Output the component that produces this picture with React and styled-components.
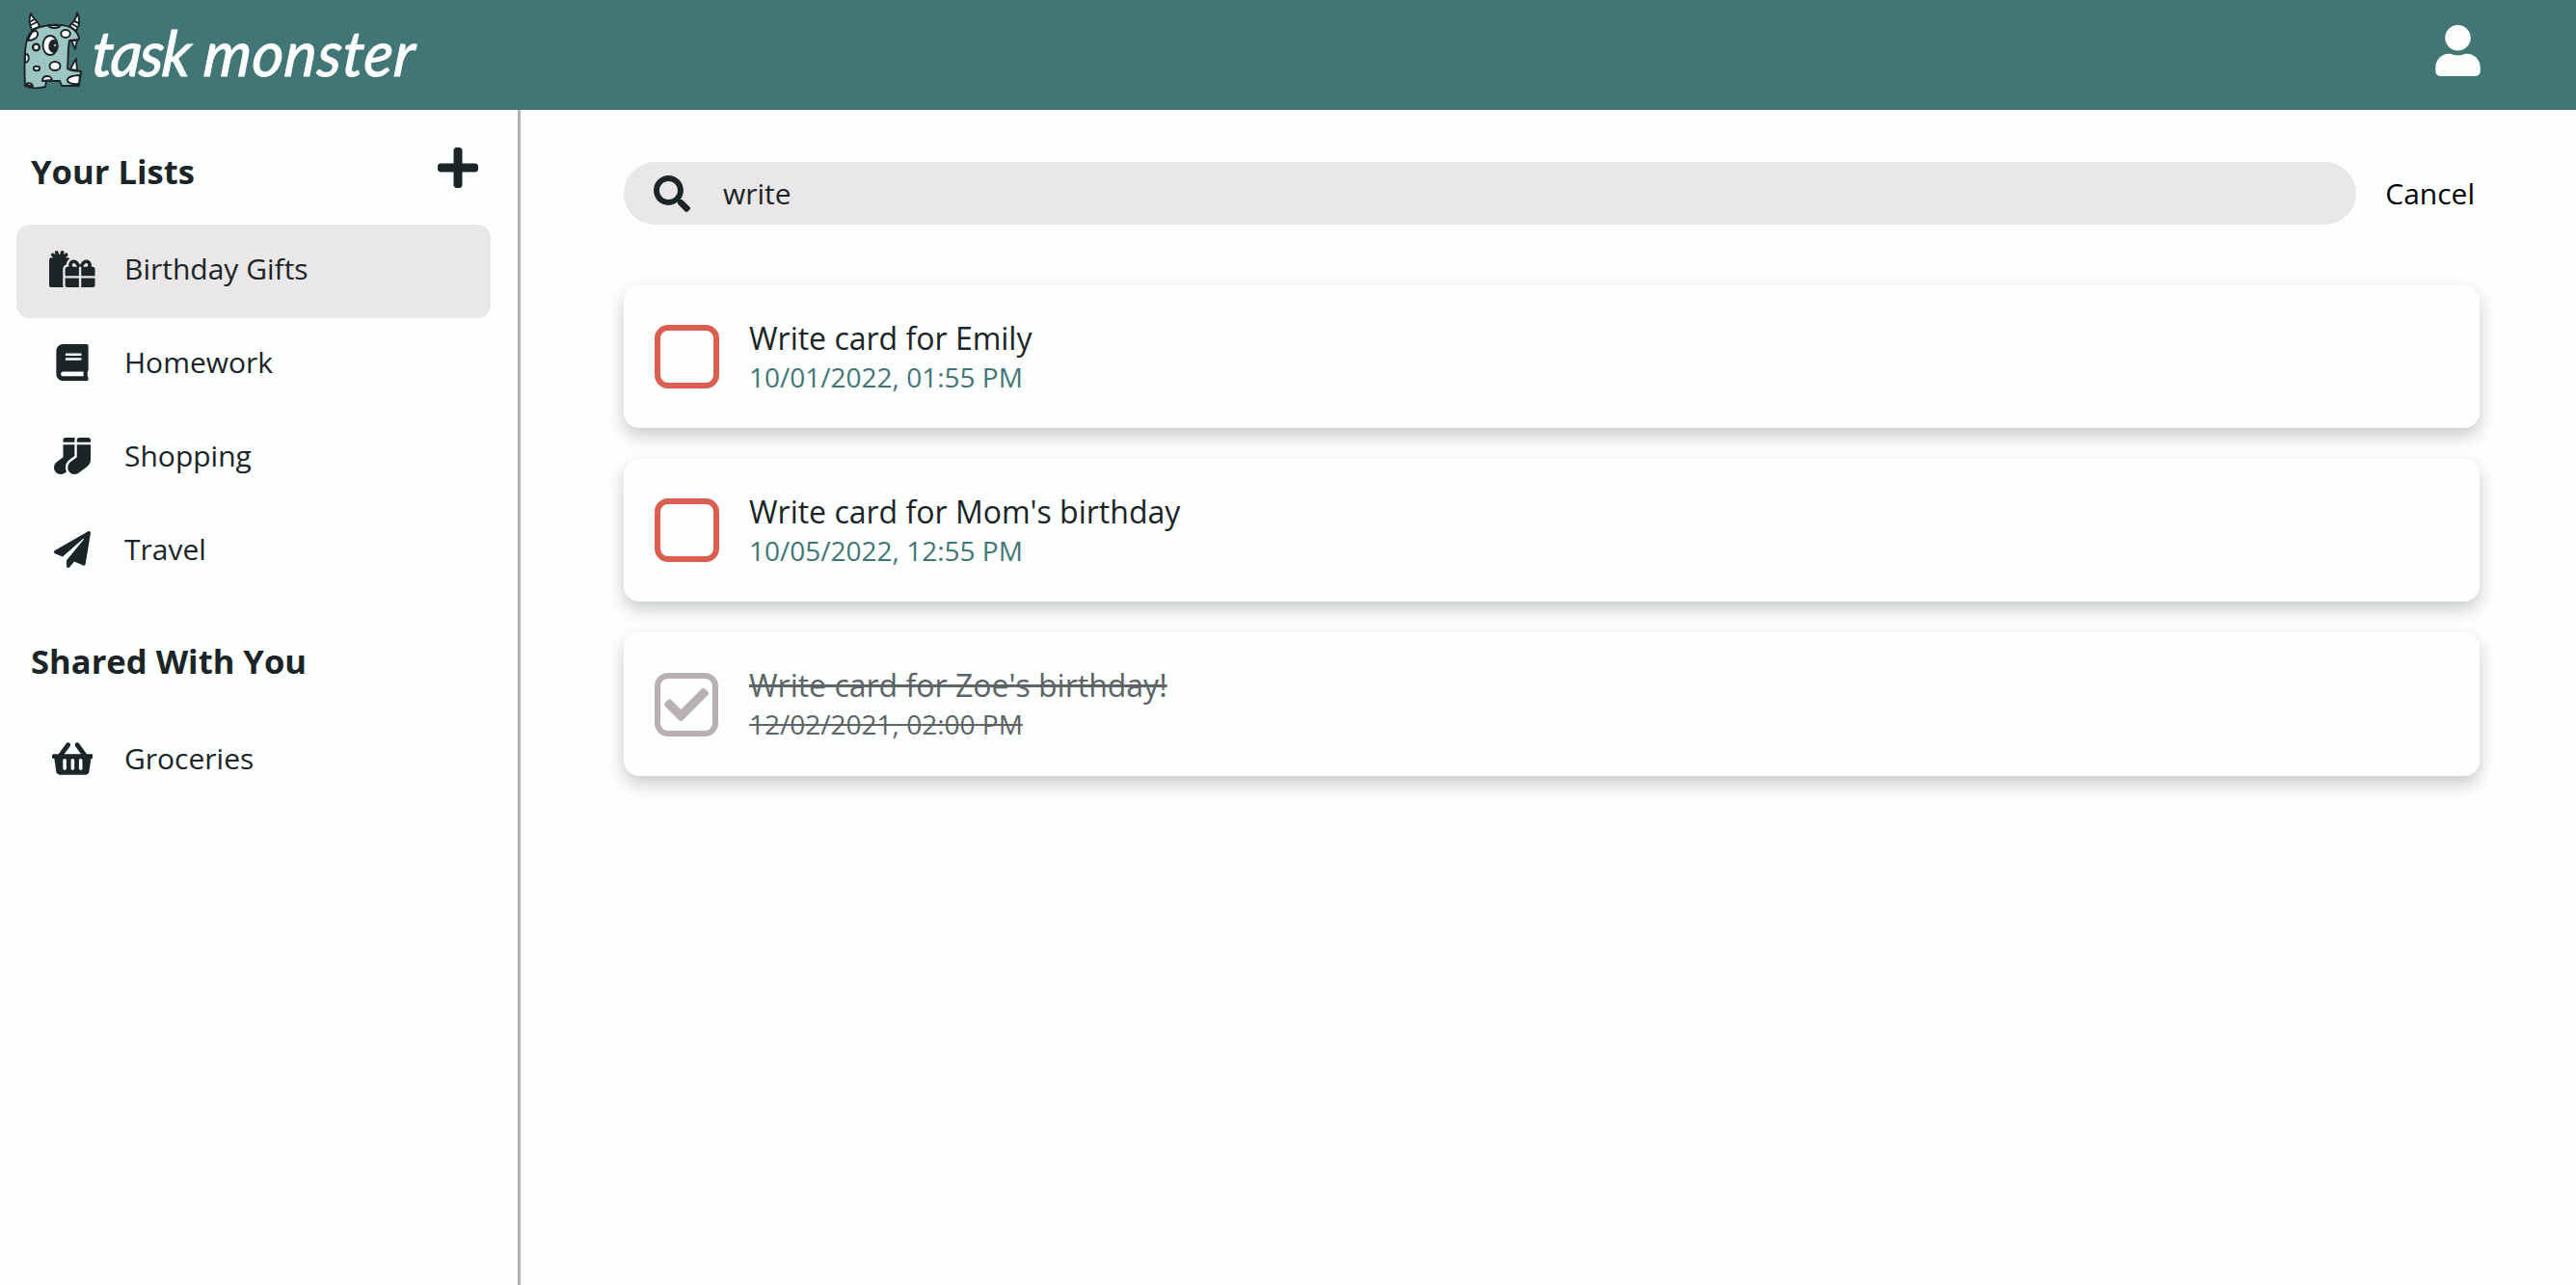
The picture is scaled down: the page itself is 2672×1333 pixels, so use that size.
import React from "react";
import styled, { createGlobalStyle } from "styled-components";
import { FaPlus, FaGifts, FaBook, FaSocks, FaPaperPlane, FaShoppingBasket, FaUser, FaSearch, FaCheck } from "react-icons/fa";

const GlobalStyle = createGlobalStyle`
  *, *::before, *::after { box-sizing: border-box; }
  body {
    margin: 0;
    background: #fdfefe;
    color: #1b2426;
    font-family: "Open Sans", "Noto Sans", sans-serif;
    overflow: hidden;
  }
  button, input { font: inherit; color: inherit; border: 0; background: none; padding: 0; }
`;

const Page = styled.div`
  display: flex;
  flex-direction: column;
  height: 100vh;
`;

const Header = styled.header`
  display: flex;
  align-items: center;
  justify-content: space-between;
  flex: none;
  height: 114px;
  padding: 0 96px 9px 24px;
  background: #427676;
  color: #fdfefe;
`;

const Brand = styled.div`
  display: flex;
  align-items: center;
`;

const MonsterSvg = styled.svg`
  width: 62px;
  height: 82px;
  display: block;
`;

const Wordmark = styled.span`
  margin: 2px 0 0 10px;
  font-family: Lato, sans-serif;
  font-style: italic;
  font-size: 65px;
  line-height: 80px;
  letter-spacing: 1px;
  white-space: nowrap;
  -webkit-text-stroke: 1.1px #fdfefe;
  transform: scaleX(0.963) skewX(-5deg);
  transform-origin: left center;
`;

const TightWord = styled.span`
  letter-spacing: -2px;
`;

const AccountButton = styled.button`
  display: flex;
  font-size: 53px;
`;

const Body = styled.div`
  display: flex;
  flex: 1;
  min-height: 0;
`;

const Sidebar = styled.aside`
  flex: none;
  width: 540px;
  border-right: 3px solid #b9b0b3;
  padding: 33px 28px 0 17px;
`;

const ListHeader = styled.div`
  display: flex;
  align-items: flex-start;
  justify-content: space-between;
  height: 86px;
  padding: 0 10px 0 15px;
`;

const ListTitle = styled.h2`
  margin: 7px 0 0;
  font-size: 34.6px;
  line-height: 48px;
  font-weight: 700;
`;

const AddButton = styled.button`
  display: flex;
  margin-top: 3px;
  font-size: 48px;
`;

const List = styled.nav`
  display: flex;
  flex-direction: column;
  margin-bottom: ${(p) => p.$gap || 0}px;
`;

const ListItem = styled.a`
  display: flex;
  align-items: center;
  height: 97px;
  padding: 0 0 6px 30px;
  border-radius: 14px;
  background: ${(p) => (p.$active ? "#eae7e8" : "transparent")};
  font-size: 30px;
`;

const ItemIcon = styled.span`
  display: flex;
  justify-content: center;
  width: 56px;
  margin-right: 26px;
  font-size: 38px;
  svg { width: ${(p) => p.$ratio}em; height: 1em; }
`;

const Main = styled.main`
  flex: 1;
  padding: 54px 100px 0 107px;
`;

const SearchRow = styled.div`
  display: flex;
  align-items: center;
  margin-bottom: 63px;
`;

const SearchField = styled.label`
  display: flex;
  align-items: center;
  flex: 1;
  height: 65px;
  padding-left: 31px;
  border-radius: 33px;
  background: #eae7e8;
  svg { font-size: 38px; }
`;

const SearchInput = styled.input`
  flex: 1;
  margin-left: 34px;
  height: 100%;
  font-size: 30px;
  outline: none;
`;

const CancelButton = styled.button`
  margin: 0 5px 0 30px;
  color: #000;
  font-size: 30px;
`;

const Tasks = styled.div`
  display: flex;
  flex-direction: column;
  gap: 32px;
`;

const Card = styled.article`
  display: flex;
  align-items: center;
  height: ${(p) => (p.$done ? 149 : 148)}px;
  padding-left: 32px;
  border-radius: 16px;
  background: #fdfefe;
  box-shadow: 0 8px 17px rgba(27, 36, 38, 0.23);
`;

const Checkbox = styled.span`
  display: flex;
  align-items: center;
  justify-content: center;
  width: ${(p) => (p.$done ? 66 : 67)}px;
  height: 66px;
  border: 6px solid ${(p) => (p.$done ? "#b9b0b3" : "#db5f50")};
  border-radius: 14px;
  color: #b9b0b3;
  font-size: 46px;
`;

const TaskText = styled.div`
  margin: 0 0 2px ${(p) => (p.$done ? 32 : 31)}px;
  color: ${(p) => (p.$done ? "#5c6465" : "#1b2426")};
  text-decoration: ${(p) => (p.$done ? "line-through" : "none")};
`;

const TaskName = styled.div`
  font-size: 32px;
  line-height: 43px;
`;

const TaskDate = styled.div`
  font-size: 28px;
  line-height: 38px;
  color: ${(p) => (p.$done ? "#5c6465" : "#427676")};
`;

const lists = [
  { name: "Birthday Gifts", icon: FaGifts, ratio: 1.25, active: true },
  { name: "Homework", icon: FaBook },
  { name: "Shopping", icon: FaSocks },
  { name: "Travel", icon: FaPaperPlane },
];

const tasks = [
  { name: "Write card for Emily", date: "10/01/2022, 01:55 PM" },
  { name: "Write card for Mom's birthday", date: "10/05/2022, 12:55 PM" },
  { name: "Write card for Zoe's birthday!", date: "12/02/2021, 02:00 PM", done: true },
];

function Monster() {
  return (
    <MonsterSvg viewBox="24 12 62 82" fill="#fdfefe" stroke="#1b2426" strokeWidth="1.9" strokeLinejoin="round" strokeLinecap="round">
      <path d="M33 31 C30 25 30 18 32 14 C34 20 40 21 41 28 Z M72 27 C76 23 79 20 80 13 C83 19 83 26 79 32 Z" />
      <path d="M32 22 l4 -2 M32 26 l6 -3 M75 25 l5 3 M77 22 l5 2" />
      <path fill="#9dc5c4" d="M26 89 C25 68 25 52 28 41 C31 31 38 28 46 27 C60 24 72 26 78 32 C81 35 82 38 82 41 L72 42 C70 52 71 62 70 71 C73 74 78 73 84 74 L82 89 L64 89 L62 84 L48 84 L47 90 C40 92 31 92 26 89 Z" />
      <path d="M50 26.5 C52 30 61 30 63 26 Z M31 37 C34 31 38 31 39 34 C40 39 35 42 29 42 Z M74 42 L80 42 L78 51 Z M73 72 C75 67 77 64 79 61 L80 73 Z M83 78 C76 78 69 80 70 84 C72 88 78 87 82 87 Z M44 84 C43 78 53 77 54 83 Z M27 88 C28 85 34 86 34 90 Z M26 56 C31 56 31 64 26 65 Z" />
      <ellipse cx="68" cy="35" rx="4.8" ry="4" />
      <circle cx="37.5" cy="49" r="3.4" strokeWidth="2.4" />
      <ellipse cx="38" cy="71" rx="3.2" ry="2.3" />
      <ellipse cx="57" cy="68.5" rx="5.5" ry="4.5" />
      <ellipse cx="52" cy="47" rx="7.5" ry="10" />
      <ellipse cx="55.5" cy="48" rx="4.2" ry="6" fill="#1b2426" />
      <circle cx="57" cy="47" r="1.2" stroke="none" fill="#9dc5c4" />
    </MonsterSvg>
  );
}

function Item({ name, icon: Icon, active, ratio = 1 }) {
  return (
    <ListItem $active={active}>
      <ItemIcon $ratio={ratio}><Icon /></ItemIcon>
      {name}
    </ListItem>
  );
}

export default function App() {
  return (
    <Page>
      <GlobalStyle />
      <Header>
        <Brand>
          <Monster />
          <Wordmark><TightWord>task</TightWord> monster</Wordmark>
        </Brand>
        <AccountButton aria-label="Account"><FaUser /></AccountButton>
      </Header>
      <Body>
        <Sidebar>
          <ListHeader>
            <ListTitle>Your Lists</ListTitle>
            <AddButton aria-label="Add list"><FaPlus /></AddButton>
          </ListHeader>
          <List $gap={34}>
            {lists.map((l) => <Item key={l.name} {...l} />)}
          </List>
          <ListHeader>
            <ListTitle>Shared With You</ListTitle>
          </ListHeader>
          <List>
            <Item name="Groceries" icon={FaShoppingBasket} ratio={1.125} />
          </List>
        </Sidebar>
        <Main>
          <SearchRow>
            <SearchField>
              <FaSearch />
              <SearchInput defaultValue="write" />
            </SearchField>
            <CancelButton>Cancel</CancelButton>
          </SearchRow>
          <Tasks>
            {tasks.map((t) => (
              <Card key={t.name} $done={t.done}>
                <Checkbox $done={t.done}>{t.done && <FaCheck />}</Checkbox>
                <TaskText $done={t.done}>
                  <TaskName>{t.name}</TaskName>
                  <TaskDate $done={t.done}>{t.date}</TaskDate>
                </TaskText>
              </Card>
            ))}
          </Tasks>
        </Main>
      </Body>
    </Page>
  );
}
